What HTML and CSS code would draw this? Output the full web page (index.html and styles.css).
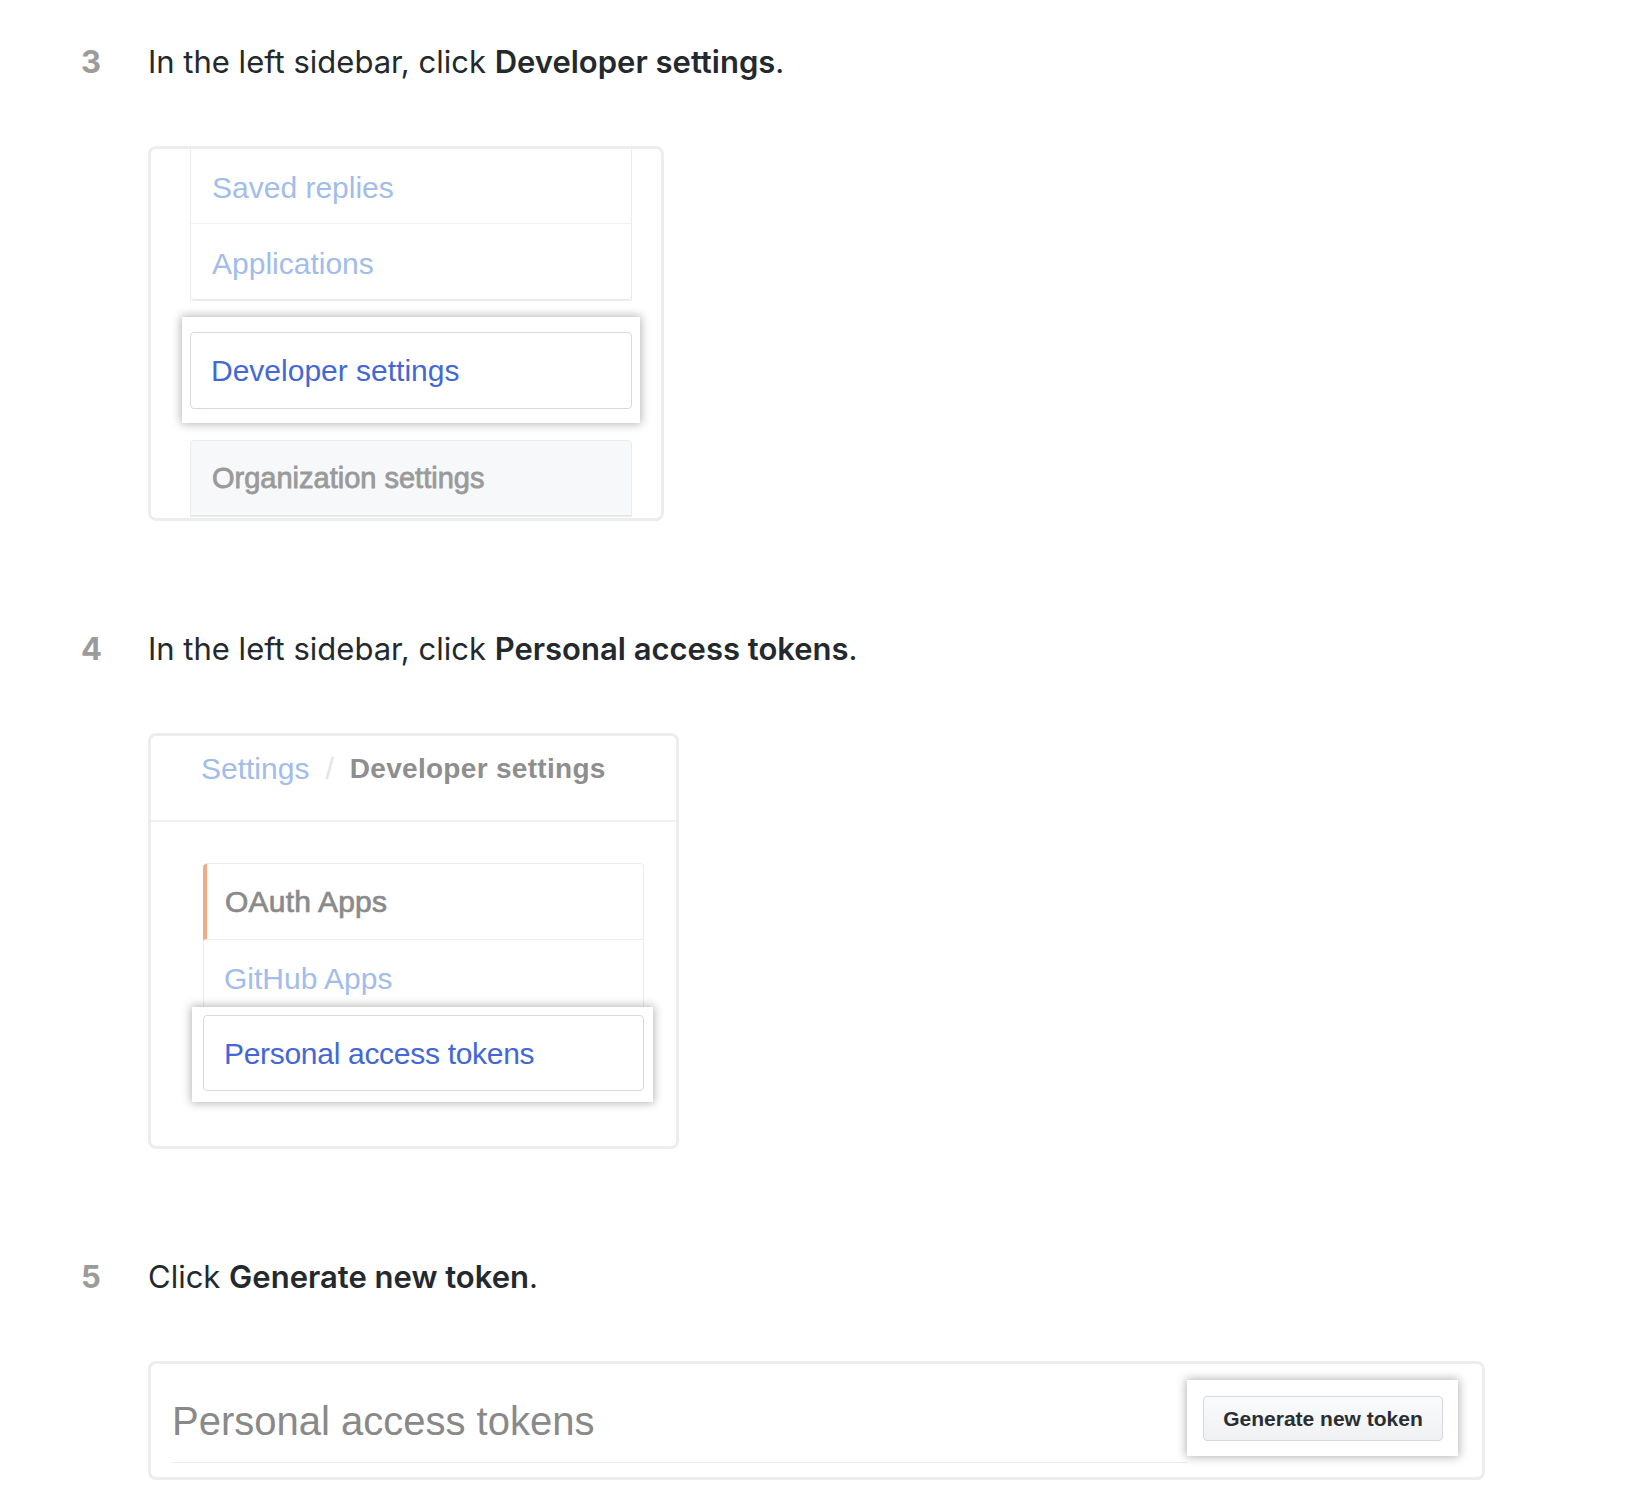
FILE: index.html
```html
<!DOCTYPE html>
<html lang="en">
<head>
<meta charset="utf-8">
<title>Steps</title>
<link rel="stylesheet" href="styles.css">
</head>
<body>
<ol class="steps">
  <li class="step">
    <div class="num">3</div>
    <div class="body">
      <p class="text">In the left sidebar, click <strong>Developer settings</strong>.</p>
      <div class="shot shot1">
        <div class="menu">
          <div class="row row-top faded">Saved replies</div>
          <div class="row row-bottom faded">Applications</div>
        </div>
        <div class="hl hl1">
          <div class="item active">Developer settings</div>
        </div>
        <div class="menu org">
          <div class="row org-row">Organization settings</div>
        </div>
      </div>
    </div>
  </li>
  <li class="step">
    <div class="num">4</div>
    <div class="body">
      <p class="text">In the left sidebar, click <strong>Personal access tokens</strong>.</p>
      <div class="shot shot2">
        <div class="crumbs">
          <span class="crumb-link">Settings</span>
          <span class="crumb-sep">/</span>
          <span class="crumb-cur">Developer settings</span>
        </div>
        <div class="shot2-body">
          <div class="menu menu2">
            <div class="row row-first selected">OAuth Apps</div>
            <div class="row faded gh">GitHub Apps</div>
          </div>
          <div class="hl hl2">
            <div class="item active">Personal access tokens</div>
          </div>
        </div>
      </div>
    </div>
  </li>
  <li class="step">
    <div class="num">5</div>
    <div class="body">
      <p class="text">Click <strong>Generate new token</strong>.</p>
      <div class="shot shot3">
        <div class="tok-head">
          <h2 class="tok-title">Personal access tokens</h2>
          <div class="hl hl3">
            <span class="btn">Generate new token</span>
          </div>
        </div>
      </div>
    </div>
  </li>
</ol>
</body>
</html>
```
FILE: styles.css
```css
html, body {
  margin: 0;
  padding: 0;
  background: #ffffff;
}

.steps {
  list-style: none;
  margin: 0;
  padding: 41px 0 0 81px;
  font-family: "Inter", "Noto Sans", sans-serif;
  color: #24292e;
}

.step {
  display: flex;
  margin-bottom: 107px;
}

.step:last-child {
  margin-bottom: 0;
}

.num {
  width: 67px;
  flex: none;
  font-size: 31px;
  line-height: 42px;
  font-weight: 700;
  color: #9b9b9b;
}

.body {
  flex: 1;
}

.text {
  margin: 0 0 63px 0;
  font-size: 31px;
  line-height: 42px;
  letter-spacing: 0;
}

.text strong {
  font-weight: 600;
}

.shot {
  border: 3px solid #ededed;
  border-radius: 8px;
  background: #fff;
  box-sizing: border-box;
  overflow: hidden;
  font-family: "Liberation Sans", Arial, sans-serif;
  font-size: 30px;
}

/* ---------- shot 1 ---------- */
.shot1 {
  width: 516px;
  height: 375px;
  padding: 0 29px 0 39px;
}

.menu {
  border: 1px solid #eaecef;
  border-top: none;
}

.row {
  height: 75px;
  display: flex;
  align-items: center;
  padding: 4px 0 0 21px;
  border-bottom: 1px solid #eef0f2;
  box-sizing: border-box;
}

.row-bottom {
  height: 76px;
  border-bottom: 1px solid #e6e8eb;
  border-radius: 0 0 4px 4px;
}

.faded {
  color: #a2bcec;
}

.hl {
  background: #fff;
  box-shadow: 0 0 9px 1px rgba(0, 0, 0, 0.3);
  position: relative;
}

.hl1 {
  margin: 16px -8px 0 -8px;
  padding: 15px 8px 14px 8px;
}

.item {
  height: 77px;
  border: 1px solid #d6d9e0;
  border-radius: 4px;
  display: flex;
  align-items: center;
  padding: 1px 0 0 20px;
  box-sizing: border-box;
}

.active {
  color: #4368d6;
}

.org {
  margin-top: 17px;
  border-top: 1px solid #eaecef;
  border-radius: 4px 4px 0 0;
  background: #f7f8fa;
}

.org-row {
  color: #9a9a9a;
  font-size: 29px;
  -webkit-text-stroke: 0.8px #9a9a9a;
  border-bottom: 1px solid #e4e6e9;
  padding-top: 0;
}

/* ---------- shot 2 ---------- */
.shot2 {
  width: 531px;
  height: 416px;
}

.crumbs {
  height: 86px;
  border-bottom: 2px solid #eff0f1;
  box-sizing: border-box;
  padding: 13px 0 0 50px;
  display: flex;
  align-items: flex-start;
  gap: 16px;
  line-height: 40px;
}

.crumb-link {
  color: #a2bcec;
}

.crumb-sep {
  color: #e2e4e7;
}

.crumb-cur {
  color: #8e8e8e;
  font-size: 28px;
  font-weight: 700;
  letter-spacing: 0.3px;
}

.shot2-body {
  padding: 41px 32px 0 52px;
}

.menu2 {
  border: 1px solid #eaecef;
  border-bottom: none;
  border-radius: 4px 4px 0 0;
}

.row-first {
  height: 76px;
  border-left: 4px solid #f1ab86;
  margin-left: -1px;
  padding: 1px 0 0 18px;
  border-radius: 4px 0 0 0;
}

.selected {
  color: #8a8a8a;
  -webkit-text-stroke: 0.7px #8a8a8a;
  letter-spacing: 0.2px;
}

.gh {
  height: 73px;
  border-bottom: none;
  padding: 4px 0 0 20px;
}

.hl2 {
  margin: -6px -9px 0 -11px;
  padding: 8px 9px 11px 11px;
}

.hl2 .item {
  height: 76px;
  letter-spacing: -0.3px;
}

/* ---------- shot 3 ---------- */
.shot3 {
  width: 1337px;
  height: 119px;
  padding: 0 24px 0 21px;
}

.tok-head {
  display: flex;
  align-items: flex-start;
}

.tok-title {
  flex: 1;
  margin: 0;
  height: 99px;
  border-bottom: 1px solid #eaeaea;
  display: flex;
  align-items: center;
  padding-top: 17px;
  box-sizing: border-box;
  font-family: "Liberation Sans", Arial, sans-serif;
  font-size: 40px;
  font-weight: 400;
  color: #898989;
}

.hl3 {
  flex: none;
  width: 271px;
  height: 76px;
  box-sizing: border-box;
  padding: 16px 15px 15px 16px;
  margin-top: 16px;
}

.btn {
  display: flex;
  align-items: center;
  justify-content: center;
  height: 45px;
  border: 1px solid #d5d8dc;
  border-radius: 4px;
  background: linear-gradient(#fafbfc, #eff1f3);
  font-family: "Liberation Sans", Arial, sans-serif;
  font-size: 21px;
  font-weight: 700;
  color: #2a2e33;
  box-sizing: border-box;
}
```
